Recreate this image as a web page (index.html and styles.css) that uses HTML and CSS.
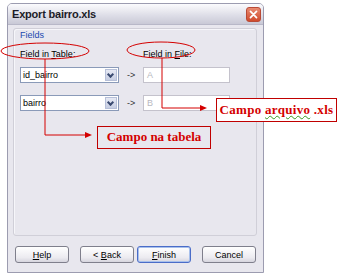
FILE: index.html
```html
<!DOCTYPE html>
<html lang="en">
<head>
    <meta charset="UTF-8">
    <title>Export bairro.xls</title>
    <link rel="stylesheet" href="styles.css">
</head>
<body>
    <div class="dialog">
        <div class="titlebar">
            <span class="title">Export bairro.xls</span>
            <span class="close">
                <svg width="15" height="15" viewBox="0 0 15 15">
                    <path d="M4 4 L11 11 M11 4 L4 11" stroke="#fff" stroke-width="2" stroke-linecap="round"/>
                </svg>
            </span>
        </div>
        <div class="content">
            <div class="group">
                <div class="legend">Fields</div>
                <div class="headers">
                    <span class="head-table">Field in <u>T</u>able:</span>
                    <span class="head-file">Field in <u>F</u>ile:</span>
                </div>
                <div class="row">
                    <div class="combo"><span class="combo-text">id_bairro</span><span class="combo-btn"></span></div>
                    <span class="to">-&gt;</span>
                    <div class="input">A</div>
                </div>
                <div class="row">
                    <div class="combo"><span class="combo-text">bairro</span><span class="combo-btn"></span></div>
                    <span class="to">-&gt;</span>
                    <div class="input">B</div>
                </div>
            </div>
            <div class="buttons">
                <button class="btn"><u>H</u>elp</button>
                <div class="pair">
                    <button class="btn">&lt; <u>B</u>ack</button>
                    <button class="btn default"><u>F</u>inish</button>
                </div>
                <button class="btn">Cancel</button>
            </div>
        </div>
    </div>

    <!-- annotations drawn over the screenshot -->
    <svg class="marks" width="341" height="275" viewBox="0 0 341 275">
        <ellipse cx="45" cy="51" rx="44" ry="8" fill="none" stroke="#d40000" stroke-width="1"/>
        <ellipse cx="161" cy="50" rx="34" ry="8" fill="none" stroke="#d40000" stroke-width="1"/>
        <polyline points="45,59 45,135 86,135" fill="none" stroke="#d40000" stroke-width="1"/>
        <polygon points="92,135 85,132 85,138" fill="#d40000"/>
        <polyline points="162,58 162,108 201,108" fill="none" stroke="#d40000" stroke-width="1"/>
        <polygon points="207,108 200,105 200,111" fill="#d40000"/>
    </svg>
    <div class="note note-table">Campo na tabela</div>
    <div class="note note-file">Campo <span class="squiggle">arquivo</span> .xls</div>
</body>
</html>
```

FILE: styles.css
```css
body {
    margin: 0;
    background: #fff;
    font-family: "Liberation Sans", Arial, sans-serif;
    font-size: 9px;
    color: #000;
}

.dialog {
    margin: 3px 0 0 7px;
    width: 255px;
    height: 268px;
    border: 1px solid #9c9cb0;
    border-radius: 5px 5px 0 0;
    background: #e8e7ee;
    display: flex;
    flex-direction: column;
}

.titlebar {
    height: 20px;
    display: flex;
    align-items: center;
    justify-content: space-between;
    padding: 0 2px 0 4px;
    border-radius: 4px 4px 0 0;
    background: linear-gradient(#fbfbfd, #dcdce6 60%, #c9c9d6);
    border-bottom: 1px solid #b8b8c8;
}

.title {
    font-size: 11px;
    font-weight: bold;
    color: #1c1c28;
    letter-spacing: -0.2px;
}

.close {
    width: 15px;
    height: 15px;
    border-radius: 3px;
    background: linear-gradient(#e88a70, #d04a2c);
    border: 1px solid #b84a36;
    box-sizing: border-box;
    display: flex;
    align-items: center;
    justify-content: center;
    margin-top: 1px;
}

.close svg {
    width: 13px;
    height: 13px;
}

.content {
    flex: 1;
    padding: 3px 6px 0 5px;
    display: flex;
    flex-direction: column;
}

.group {
    height: 206px;
    border: 1px solid #d0cfd8;
    border-radius: 3px;
    padding: 0 0 0 6px;
    box-shadow: inset 1px 1px 0 #f6f6fa;
}

.legend {
    color: #2048b0;
    height: 10px;
    line-height: 10px;
    margin-top: 1px;
}

.headers {
    display: flex;
    margin-top: 8px;
    height: 12px;
    line-height: 12px;
}

.head-table {
    width: 123px;
}

.row {
    display: flex;
    align-items: center;
    margin-top: 7px;
    height: 16px;
}

.row + .row {
    margin-top: 12px;
}

.combo {
    width: 99px;
    height: 16px;
    box-sizing: border-box;
    border: 1px solid #8a9ab8;
    background: #fff;
    display: flex;
    align-items: center;
    justify-content: space-between;
    padding: 1px 1px 1px 2px;
}

.combo-btn {
    width: 12px;
    height: 12px;
    background: linear-gradient(#e6e9f4, #c6cde2);
    border: 1px solid #b6bfd8;
    box-sizing: border-box;
    position: relative;
}

.combo-btn::after {
    content: "";
    position: absolute;
    left: 2px;
    top: 2px;
    width: 3px;
    height: 3px;
    border-right: 2px solid #3a4a70;
    border-bottom: 2px solid #3a4a70;
    transform: rotate(45deg);
}

.to {
    width: 24px;
    padding-left: 8px;
    box-sizing: border-box;
    color: #333;
}

.input {
    width: 87px;
    height: 16px;
    box-sizing: border-box;
    border: 1px solid #c4c2cc;
    background: #fff;
    color: #b8b8c0;
    padding: 2px 0 0 3px;
}

.buttons {
    display: flex;
    justify-content: space-between;
    margin-top: 10px;
    padding: 0 1px 0 2px;
}

.pair {
    display: flex;
    gap: 3px;
}

.btn {
    width: 54px;
    height: 17px;
    padding: 0;
    font-family: "Liberation Sans", Arial, sans-serif;
    font-size: 9px;
    color: #000;
    border: 1px solid #7f7f8c;
    border-radius: 3px;
    background: linear-gradient(#ffffff, #ecebf0 70%, #d6d5de);
}

.btn.default {
    border-color: #4a6cc8;
    box-shadow: inset 0 0 0 1px #a8c0ec;
}

.marks {
    position: absolute;
    top: 0;
    left: 0;
}

.note {
    position: absolute;
    box-sizing: border-box;
    border: 1.5px solid #c00000;
    background: #e8e7ee;
    color: #d40000;
    font-family: "Liberation Serif", "Times New Roman", serif;
    font-weight: bold;
    font-size: 13px;
    text-align: center;
    white-space: nowrap;
}

.note-table {
    left: 97px;
    top: 126px;
    width: 114px;
    height: 23px;
    line-height: 20px;
}

.note-file {
    left: 216px;
    top: 98px;
    width: 121px;
    height: 24px;
    line-height: 21px;
    background: #fff;
    letter-spacing: 0.3px;
}

.squiggle {
    text-decoration: underline wavy #3a9a20;
    text-decoration-thickness: 1px;
}
```
